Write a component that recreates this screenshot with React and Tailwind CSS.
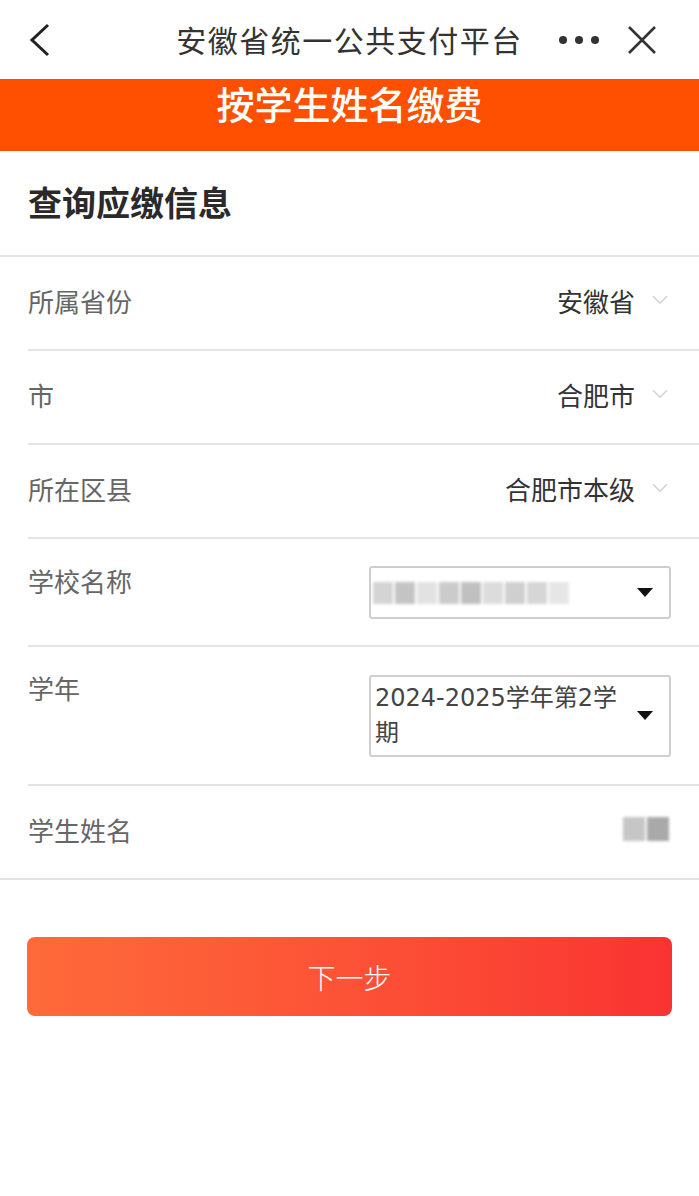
import { ChevronDown } from "lucide-react";

const FONT = { fontFamily: '"Noto Sans CJK SC", "Noto Sans", sans-serif' };
const SELECT_FONT = { fontFamily: '"DejaVu Sans", "Noto Sans CJK SC", sans-serif' };

const Caret = () => (
  <svg width="16" height="10" viewBox="0 0 16 10" className="shrink-0">
    <path d="M0 0 L16 0 L8 9 Z" fill="#111" />
  </svg>
);

const Blurred = ({ blocks }) => (
  <div className="flex items-center gap-[2px] blur-[1.5px]">
    {blocks.map((c, i) => (
      <div key={i} className={`h-[22px] w-[20px] ${c}`} />
    ))}
  </div>
);

const PickRow = ({ label, value }) => (
  <div className="ml-[28px] h-[94px] flex items-center justify-between border-b-2 border-[#e4e4e4] pb-[6px]">
    <span className="text-[26px] text-[#666]">{label}</span>
    <div className="flex items-center gap-[12px] pr-[26px]">
      <span className="text-[26px] text-[#333]">{value}</span>
      <ChevronDown size={26} strokeWidth={1.4} color="#cfd3d6" />
    </div>
  </div>
);

export default function App() {
  return (
    <div className="w-[699px] min-h-[1196px] bg-white" style={FONT}>
      {/* top bar */}
      <div className="h-[79px] flex items-center px-[26px]">
        <div className="flex-1 flex">
          <svg width="26" height="34" viewBox="0 0 26 34" className="ml-[2px]">
            <path d="M20 2 L4 17 L20 32" fill="none" stroke="#222" strokeWidth="3" />
          </svg>
        </div>
        <div className="text-[30px] text-[#333] tracking-[1.5px]">安徽省统一公共支付平台</div>
        <div className="flex-1 flex items-center justify-end">
          <div className="flex items-center gap-[8px] mr-[28px]">
            <span className="w-[8px] h-[8px] rounded-full bg-[#333]" />
            <span className="w-[8px] h-[8px] rounded-full bg-[#333]" />
            <span className="w-[8px] h-[8px] rounded-full bg-[#333]" />
          </div>
          <svg width="30" height="30" viewBox="0 0 30 30" className="mr-[16px]">
            <path d="M2 2 L28 28 M28 2 L2 28" stroke="#333" strokeWidth="2.6" />
          </svg>
        </div>
      </div>

      {/* orange band */}
      <div className="h-[72px] bg-[#fe5000] flex justify-center">
        <span className="text-white text-[38px] font-medium leading-none pt-[5px]">
          按学生姓名缴费
        </span>
      </div>

      {/* section header */}
      <div className="h-[106px] flex items-center px-[28px] border-b-2 border-[#e4e4e4] pb-[4px]">
        <span className="text-[34px] font-bold text-[#2a2a2a]">查询应缴信息</span>
      </div>

      <PickRow label="所属省份" value="安徽省" />
      <PickRow label="市" value="合肥市" />
      <PickRow label="所在区县" value="合肥市本级" />

      {/* school */}
      <div className="ml-[28px] h-[108px] flex items-start justify-between border-b-2 border-[#e4e4e4] pt-[27px]">
        <span className="text-[26px] text-[#666] leading-[36px] -mt-[3px]">学校名称</span>
        <div className="w-[302px] h-[53px] mr-[28px] border-2 border-[#cfcfcf] rounded-[3px] flex items-center justify-between pl-[2px] pr-[16px]">
          <Blurred
            blocks={[
              "bg-[#d4d4d4]",
              "bg-[#c4c4c4]",
              "bg-[#e2e2e2]",
              "bg-[#cbcbcb]",
              "bg-[#c0c0c0]",
              "bg-[#dcdcdc]",
              "bg-[#cfcfcf]",
              "bg-[#d6d6d6]",
              "bg-[#e6e6e6]",
            ]}
          />
          <Caret />
        </div>
      </div>

      {/* year */}
      <div className="ml-[28px] h-[139px] flex items-start justify-between border-b-2 border-[#e4e4e4] pt-[28px]">
        <span className="text-[26px] text-[#666] leading-[36px] -mt-[5px]">学年</span>
        <div className="w-[302px] h-[82px] mr-[28px] border-2 border-[#cfcfcf] rounded-[3px] flex items-center justify-between pl-[4px] pr-[16px]">
          <span className="text-[24px] text-[#444] leading-[35px] w-[252px]" style={SELECT_FONT}>
            2024-2025学年第2学期
          </span>
          <Caret />
        </div>
      </div>

      {/* student name */}
      <div className="h-[94px] flex items-center justify-between border-b-2 border-[#e4e4e4] pl-[28px] pr-[30px] pb-[6px]">
        <span className="text-[26px] text-[#666]">学生姓名</span>
        <div className="flex gap-[2px] blur-[1.5px]">
          <div className="w-[22px] h-[24px] bg-[#c6c6c6]" />
          <div className="w-[22px] h-[24px] bg-[#a9a9a9]" />
        </div>
      </div>

      {/* button */}
      <div className="px-[27px] pt-[57px]">
        <button className="w-full h-[79px] rounded-[8px] bg-gradient-to-r from-[#fe6a3a] to-[#f93232] text-white text-[28px] font-light">
          下一步
        </button>
      </div>
    </div>
  );
}
